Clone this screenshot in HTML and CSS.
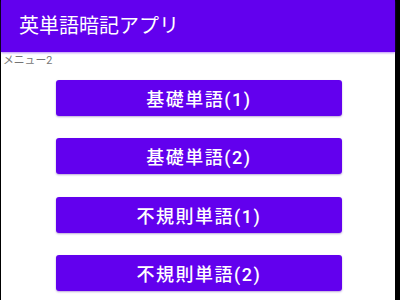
FILE: index.html
```html
<!DOCTYPE html>
<html lang="ja">
<head>
<meta charset="utf-8">
<link rel="stylesheet" href="styles.css">
</head>
<body>
<div class="screen">
  <header class="appbar">
    <h1 class="title">英単語暗記アプリ</h1>
  </header>
  <div class="label">メニュー2</div>
  <div class="menu">
    <button class="btn">基礎単語(1)</button>
    <button class="btn">基礎単語(2)</button>
    <button class="btn">不規則単語(1)</button>
    <button class="btn">不規則単語(2)</button>
  </div>
</div>
</body>
</html>
```
FILE: styles.css
```css
html, body {
  margin: 0;
  padding: 0;
  height: 100%;
  background: #000;
  overflow: hidden;
}
body {
  font-family: Roboto, "Noto Sans CJK JP", sans-serif;
}
.screen {
  margin-left: 1px;
  width: 394px;
  height: 300px;
  background: #fff;
  display: flex;
  flex-direction: column;
}
.appbar {
  height: 52px;
  background: #6200ee;
  box-shadow: 0 1px 2px rgba(98, 0, 238, 0.45);
  display: flex;
  align-items: center;
  padding-left: 18px;
  flex-shrink: 0;
}
.title {
  margin: 0;
  font-size: 20px;
  font-weight: 400;
  color: #fff;
  line-height: 1;
}
.label {
  font-size: 10.8px;
  color: #757575;
  line-height: 13px;
  padding-left: 2px;
  margin-top: 2px;
}
.menu {
  display: flex;
  flex-direction: column;
  align-items: center;
  gap: 22.3px;
  margin-top: 13px;
}
.btn {
  width: 286px;
  height: 36px;
  background: #6200ee;
  color: #fff;
  border: none;
  border-radius: 3px;
  box-shadow: 0 1px 2px rgba(60, 0, 140, 0.35);
  font-family: Roboto, "Noto Sans CJK JP", sans-serif;
  font-size: 18px;
  font-weight: 500;
  letter-spacing: 1.5px;
  padding: 0;
  display: flex;
  align-items: center;
  justify-content: center;
  margin-left: 2px;
}
```
